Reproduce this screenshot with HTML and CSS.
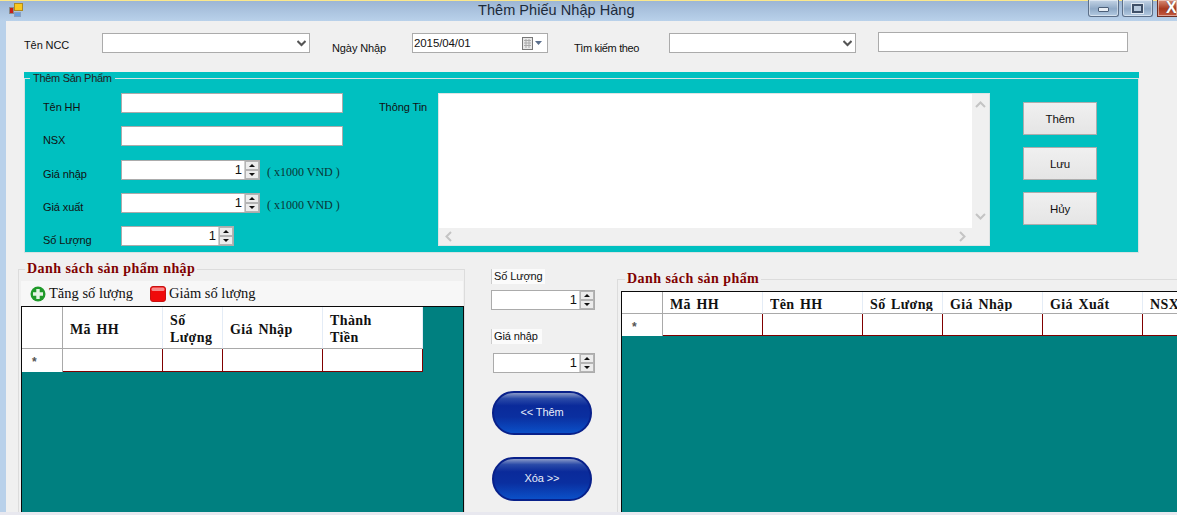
FILE: index.html
```html
<!DOCTYPE html>
<html lang="vi">
<head>
  <meta charset="UTF-8" />
  <title>Thêm Phiếu Nhập Hàng</title>
  <link rel="stylesheet" href="styles.css">
</head>
<body>
  <div class="titlebar">
    <svg class="app-icon" width="14" height="14" viewBox="0 0 14 14">
      <rect x="0.5" y="4.5" width="4" height="6" fill="#c8201a" stroke="#8a8a8a"/>
      <rect x="5.5" y="0.5" width="8" height="7" fill="#f8c820" stroke="#b08a20"/>
      <rect x="5.5" y="9.5" width="6" height="4" fill="#6a9ee0" stroke="#8aa0c0"/>
    </svg>
    <div class="title">Thêm Phiếu Nhập Hàng</div>
    <div class="win-buttons">
      <div class="win-btn"><span class="min-glyph"></span></div>
      <div class="win-btn"><span class="max-glyph"></span></div>
      <div class="win-btn close"><span class="close-glyph">X</span></div>
    </div>
  </div>

  <div class="client">
    <!-- hàng trên cùng -->
    <div class="top-row">
      <label class="lbl-ncc">Tên NCC</label>
      <div class="combo combo-ncc"><svg width="9" height="7" viewBox="0 0 9 7"><path d="M0.5 1 L4.5 5 L8.5 1" fill="none" stroke="#555" stroke-width="2"/></svg></div>
      <label class="lbl-ngay">Ngày Nhập</label>
      <div class="date">
        <span>2015/04/01</span>
        <svg width="20" height="13" viewBox="0 0 20 13">
          <rect x="0.5" y="0.5" width="10" height="12" fill="#e8e8e8" stroke="#777"/>
          <path d="M2 3.5H9M2 6H9M2 8.5H9M4 2V11M7 2V11" stroke="#aaa" stroke-width="1"/>
          <path d="M13 4H20L16.5 8Z" fill="#5b6f8c"/>
        </svg>
      </div>
      <label class="lbl-tim">Tìm kiếm theo</label>
      <div class="combo combo-tim"><svg width="9" height="7" viewBox="0 0 9 7"><path d="M0.5 1 L4.5 5 L8.5 1" fill="none" stroke="#555" stroke-width="2"/></svg></div>
      <div class="textbox search-box"></div>
    </div>

    <!-- thêm sản phẩm -->
    <div class="panel">
      <fieldset class="panel-set">
        <legend>Thêm Sản Phẩm</legend>
        <div class="panel-body">
          <div class="fields">
            <div class="field"><label>Tên HH</label><div class="textbox w-wide"></div></div>
            <div class="field"><label>NSX</label><div class="textbox w-wide"></div></div>
            <div class="field">
              <label>Giá nhập</label>
              <div class="num w-price"><span>1</span><div class="spin"><i class="up"></i><i class="down"></i></div></div>
              <span class="unit">( x1000 VND )</span>
            </div>
            <div class="field">
              <label>Giá xuất</label>
              <div class="num w-price"><span>1</span><div class="spin"><i class="up"></i><i class="down"></i></div></div>
              <span class="unit">( x1000 VND )</span>
            </div>
            <div class="field">
              <label>Số Lượng</label>
              <div class="num w-qty"><span>1</span><div class="spin"><i class="up"></i><i class="down"></i></div></div>
            </div>
          </div>
          <label class="lbl-info">Thông Tin</label>
          <div class="memo">
            <div class="memo-text"></div>
            <div class="vscroll">
              <svg width="11" height="7" viewBox="0 0 11 7"><path d="M1 6L5.5 1.5L10 6" fill="none" stroke="#c4c4c4" stroke-width="2"/></svg>
              <svg width="11" height="7" viewBox="0 0 11 7"><path d="M1 1L5.5 5.5L10 1" fill="none" stroke="#c4c4c4" stroke-width="2"/></svg>
            </div>
            <div class="hscroll">
              <svg width="7" height="11" viewBox="0 0 7 11"><path d="M6 1L1.5 5.5L6 10" fill="none" stroke="#c4c4c4" stroke-width="2"/></svg>
              <svg width="7" height="11" viewBox="0 0 7 11"><path d="M1 1L5.5 5.5L1 10" fill="none" stroke="#c4c4c4" stroke-width="2"/></svg>
            </div>
          </div>
          <div class="actions">
            <button>Thêm</button>
            <button>Lưu</button>
            <button>Hủy</button>
          </div>
        </div>
      </fieldset>
    </div>

    <div class="lower">
      <!-- danh sách nhập -->
      <fieldset class="list-set list-left">
        <legend>Danh sách sản phẩm nhập</legend>
        <div class="toolbar">
          <div class="tool">
            <svg width="16" height="16" viewBox="0 0 16 16">
              <circle cx="8" cy="8" r="7.5" fill="#1f9a2a"/>
              <path d="M8 3V13M3 8H13" stroke="#e4f4e4" stroke-width="3.4"/>
            </svg>
            Tăng số lượng
          </div>
          <div class="tool">
            <svg width="16" height="16" viewBox="0 0 16 16">
              <rect x="0.5" y="0.5" width="15" height="15" rx="2.5" fill="#f00a0a" stroke="#c81010"/>
              <rect x="1.5" y="1.5" width="13" height="3.5" rx="1.5" fill="#f78a8a"/>
            </svg>
            Giảm số lượng
          </div>
        </div>
        <div class="grid grid-left">
          <div class="grid-head">
            <div class="corner"></div>
            <div class="hcell c100">Mã HH</div>
            <div class="hcell c60">Số<br>Lượng</div>
            <div class="hcell c100">Giá Nhập</div>
            <div class="hcell c100">Thành<br>Tiền</div>
          </div>
          <div class="grid-row">
            <div class="row-head">*</div>
            <div class="cell c100"></div>
            <div class="cell c60"></div>
            <div class="cell c100"></div>
            <div class="cell c100"></div>
          </div>
        </div>
      </fieldset>

      <!-- cột giữa -->
      <div class="middle">
        <div class="cap cap-qty">Số Lượng</div>
        <div class="num w-mid1"><span>1</span><div class="spin"><i class="up"></i><i class="down"></i></div></div>
        <div class="cap cap-price">Giá nhập</div>
        <div class="num w-mid2"><span>1</span><div class="spin"><i class="up"></i><i class="down"></i></div></div>
        <div class="pill pill-add">&lt;&lt; Thêm</div>
        <div class="pill pill-del">Xóa &gt;&gt;</div>
      </div>

      <!-- danh sách sản phẩm -->
      <fieldset class="list-set list-right">
        <legend>Danh sách sản phẩm</legend>
        <div class="grid grid-right">
          <div class="grid-head">
            <div class="corner"></div>
            <div class="hcell c100"><span>Mã HH</span></div>
            <div class="hcell c100"><span>Tên HH</span></div>
            <div class="hcell c80"><span>Số Lương</span></div>
            <div class="hcell c100"><span>Giá Nhập</span></div>
            <div class="hcell c100"><span>Giá Xuất</span></div>
            <div class="hcell c100"><span>NSX</span></div>
          </div>
          <div class="grid-row">
            <div class="row-head">*</div>
            <div class="cell c100"></div>
            <div class="cell c100"></div>
            <div class="cell c80"></div>
            <div class="cell c100"></div>
            <div class="cell c100"></div>
            <div class="cell c100"></div>
          </div>
        </div>
      </fieldset>
    </div>
  </div>
  <div class="bottom-edge"></div>
</body>
</html>
```

FILE: styles.css
```css
* {
  box-sizing: border-box;
}
html, body {
  margin: 0;
  height: 515px;
  overflow: hidden;
}
body {
  font-family: "Liberation Sans", Arial, sans-serif;
  font-size: 11px;
  letter-spacing: -0.1px;
  color: #111;
  background: #b9d1ea;
}

/* title bar */
.titlebar {
  height: 21px;
  display: flex;
  align-items: flex-start;
  border-top: 1px solid #fbe88c;
  background: linear-gradient(#9db6d4, #b9d1ea);
  padding-left: 9px;
}
.app-icon {
  margin-top: 2px;
}
.title {
  margin-left: 455px;
  font-size: 14.5px;
  line-height: 18px;
  letter-spacing: 0.05px;
  color: #1c2a3a;
}
.win-buttons {
  margin-left: auto;
  display: flex;
  gap: 3px;
}
.win-btn {
  width: 31px;
  height: 17px;
  margin-top: -1px;
  border: 1px solid #5c6f88;
  border-top: 0;
  border-radius: 0 0 3px 3px;
  background: linear-gradient(#c4d4e6, #8fa9c6 55%, #b4cbe2);
  box-shadow: inset 0 0 0 1px rgba(255,255,255,0.45);
  display: flex;
  align-items: center;
  justify-content: center;
}
.win-btn.close {
  width: 20px;
  justify-content: flex-start;
  padding-left: 8px;
  margin-left: 1px;
  border-radius: 0;
  border-right: 0;
  border-color: #6e2e22;
  background: linear-gradient(#d98c76, #a8381f 55%, #c45a40);
}
.min-glyph {
  width: 11px;
  height: 5px;
  margin-top: 3px;
  background: #e8eef5;
  border: 1px solid #4c5f78;
  border-radius: 1px;
}
.max-glyph {
  width: 11px;
  height: 9px;
  border: 2px solid #3f5068;
  outline: 1px solid #dfe8f2;
  background: #b8cade;
}
.close-glyph {
  font-weight: bold;
  font-size: 16px;
  line-height: 14px;
  color: #fff;
  text-shadow: 0 0 1px #444;
}

.client {
  height: 491px;
  margin-left: 6px;
  background: #f0f0f0;
  overflow: hidden;
}
.bottom-edge {
  height: 3px;
  background: #e8e8ef;
}

/* top row */
.top-row {
  height: 51px;
  padding: 12px 0 0 18px;
  display: flex;
  align-items: flex-start;
}
.lbl-ncc {
  width: 78px;
  margin-top: 5px;
  line-height: 14px;
}
.lbl-ngay {
  margin: 8px 0 0 22px;
  width: 80px;
  line-height: 14px;
}
.lbl-tim {
  margin: 8px 0 0 26px;
  width: 95px;
  line-height: 14px;
  letter-spacing: -0.35px;
}
.combo, .date, .textbox, .num {
  height: 20px;
  background: #fff;
  border: 1px solid #ababab;
}
.combo {
  display: flex;
  align-items: center;
  justify-content: flex-end;
  padding-right: 3px;
}
.combo-ncc {
  width: 208px;
}
.combo-tim {
  width: 187px;
}
.date {
  width: 136px;
  padding: 0 5px 0 1px;
  font-size: 11.5px;
  display: flex;
  align-items: center;
  justify-content: space-between;
}
.search-box {
  width: 250px;
  margin: -1px 0 0 22px;
}

/* teal panel */
.panel {
  width: 1115px;
  height: 181px;
  margin-left: 18px;
  background: #00c0c0;
}
.panel-set {
  margin: 0;
  padding: 8px 0 0 0;
  height: 181px;
  border: 1px solid #d8e2e2;
}
.panel-set legend {
  margin-left: 5px;
  padding: 0 3px;
  line-height: 13px;
  letter-spacing: -0.3px;
  color: #222;
}
.panel-body {
  display: flex;
  align-items: flex-start;
}
.fields {
  width: 354px;
}
.field {
  height: 33.3px;
  padding-left: 18px;
  display: flex;
  align-items: flex-start;
}
.field label {
  width: 78px;
  margin-top: 7px;
  line-height: 14px;
}
.w-wide {
  width: 222px;
}
.w-price {
  width: 139px;
}
.w-qty {
  width: 113px;
}
.unit {
  margin: 4px 0 0 5px;
  padding-left: 2px;
  font-family: "Liberation Serif", serif;
  font-size: 12px;
  line-height: 16px;
  letter-spacing: 0;
  color: #0a3535;
  white-space: pre;
}
.num {
  display: flex;
  justify-content: flex-end;
  align-items: stretch;
  line-height: 17px;
  font-size: 13px;
}
.num span {
  padding-right: 2px;
}
.spin {
  width: 15px;
  display: flex;
  flex-direction: column;
  border-left: 1px solid #d0d0d0;
}
.spin i {
  flex: 1;
  display: flex;
  align-items: center;
  justify-content: center;
  background: #ececec;
  border: 1px solid #b4b4b4;
}
.spin i::after {
  content: "";
  border-left: 3px solid transparent;
  border-right: 3px solid transparent;
}
.spin .up::after {
  border-bottom: 3px solid #111;
}
.spin .down::after {
  border-top: 3px solid #111;
}
.lbl-info {
  width: 59px;
  margin-top: 7px;
  line-height: 14px;
}
.memo {
  width: 552px;
  height: 153px;
  border: 1px solid #dde4e4;
  display: grid;
  grid-template-columns: 1fr 17px;
  grid-template-rows: 1fr 17px;
  background: #f0f0f0;
}
.memo-text {
  background: #fff;
}
.vscroll {
  grid-row: 1 / 3;
  grid-column: 2;
  padding: 7px 0 25px;
  display: flex;
  flex-direction: column;
  justify-content: space-between;
  align-items: center;
}
.hscroll {
  grid-row: 2;
  grid-column: 1;
  padding: 0 6px 0 6px;
  display: flex;
  justify-content: space-between;
  align-items: center;
}
.actions {
  margin: 9px 0 0 33px;
  display: flex;
  flex-direction: column;
  gap: 12px;
}
.actions button {
  width: 74px;
  height: 33px;
  padding: 0;
  font: 11.5px "Liberation Sans", Arial, sans-serif;
  letter-spacing: -0.1px;
  color: #111;
  border: 1px solid #adadad;
  border-radius: 0;
  background: linear-gradient(#f0f0f0, #e5e5e5);
}

/* lower area */
.lower {
  display: flex;
  align-items: flex-start;
}
.list-set {
  margin: 0;
  padding: 0;
  border: 1px solid #dcdcdc;
  border-bottom: 0;
  min-width: 0;
}
.list-set legend {
  padding: 0 2px;
  font-family: "Liberation Serif", serif;
  font-size: 14px;
  font-weight: bold;
  line-height: 16px;
  letter-spacing: 0.45px;
  color: #800000;
}
.list-left {
  width: 447px;
  height: 253px;
  margin: 8px 0 0 12px;
}
.list-left legend {
  margin-left: 6px;
}
.toolbar {
  height: 25px;
  margin: 4px 1px 0 2px;
  padding-left: 9px;
  display: flex;
  align-items: center;
  gap: 17px;
  background: #f7f7f7;
  font-family: "Liberation Serif", serif;
  font-size: 14.5px;
  letter-spacing: 0;
}
.tool {
  display: flex;
  align-items: center;
  gap: 3px;
}
.grid {
  background: #008080;
  border: 1px solid #0a0a0a;
  border-bottom: 0;
  font-family: "Liberation Serif", serif;
  font-size: 14px;
  font-weight: bold;
  letter-spacing: 0.4px;
  word-spacing: 1.5px;
  overflow: hidden;
}
.grid-left {
  height: 209px;
  margin-left: 2px;
  width: 443px;
}
.grid-right {
  height: 225px;
  margin: 4px 0 0 3px;
  width: 556px;
  border-right: 0;
}
.grid-head, .grid-row {
  display: flex;
}
.grid-left .grid-head {
  height: 42px;
}
.grid-right .grid-head {
  height: 22px;
}
.grid-row {
  height: 23px;
}
.grid-right .grid-row {
  height: 22px;
}
.corner, .row-head {
  width: 41px;
  flex: none;
  background: #fff;
  border-right: 1px solid #a9a9a9;
}
.corner {
  border-bottom: 1px solid #a9a9a9;
}
.row-head {
  font-family: "Liberation Sans", Arial, sans-serif;
  font-size: 12px;
  font-weight: bold;
  color: #555;
  text-align: center;
  line-height: 26px;
  padding-right: 15px;
}
.hcell {
  flex: none;
  padding: 5px 6px 0 7px;
  line-height: 17px;
  background: #fff;
  border-right: 1px solid #e4ecf6;
  border-bottom: 1px solid #a9a9a9;
}
.grid-left .hcell:nth-child(2), .grid-left .hcell:nth-child(4) {
  padding-top: 14px;
}
.grid-right .hcell {
  padding-top: 4px;
  white-space: nowrap;
  overflow: hidden;
}
.grid-right .hcell span {
  display: block;
  height: 15px;
  overflow: hidden;
}
.cell {
  flex: none;
  background: #fff;
  border-right: 1px solid #800000;
  border-bottom: 1px solid #800000;
}
.c100 {
  width: 100px;
}
.c80 {
  width: 80px;
}
.c60 {
  width: 60px;
}

/* middle column */
.middle {
  width: 152px;
  padding: 16px 0 0 26px;
  flex: none;
}
.cap {
  height: 15px;
  background: #fbfbfb;
  border-left: 1px solid #ccc;
  padding-left: 2px;
  line-height: 15px;
  white-space: nowrap;
}
.cap-qty {
  width: 54px;
}
.cap-price {
  width: 51px;
  margin-top: 19px;
}
.w-mid1 {
  width: 104px;
  margin-top: 6px;
}
.w-mid2 {
  width: 102px;
  margin: 9px 0 0 2px;
}
.pill {
  width: 100px;
  height: 44px;
  margin-left: 1px;
  border-radius: 22px;
  border: 2px solid #08208a;
  background: linear-gradient(#8a9ac8, #2a4aa8 14%, #0a2a9a 32%, #0a2fa0 60%, #0b50c8);
  color: #e8eefa;
  display: flex;
  align-items: center;
  justify-content: center;
  padding-bottom: 3px;
}
.pill-add {
  margin-top: 18px;
}
.pill-del {
  margin-top: 22px;
}
.list-right {
  flex: none;
  width: 560px;
  height: 243px;
  margin: 18px 0 0 0;
  border-right: 0;
}
.list-right legend {
  margin-left: 7px;
}
```
